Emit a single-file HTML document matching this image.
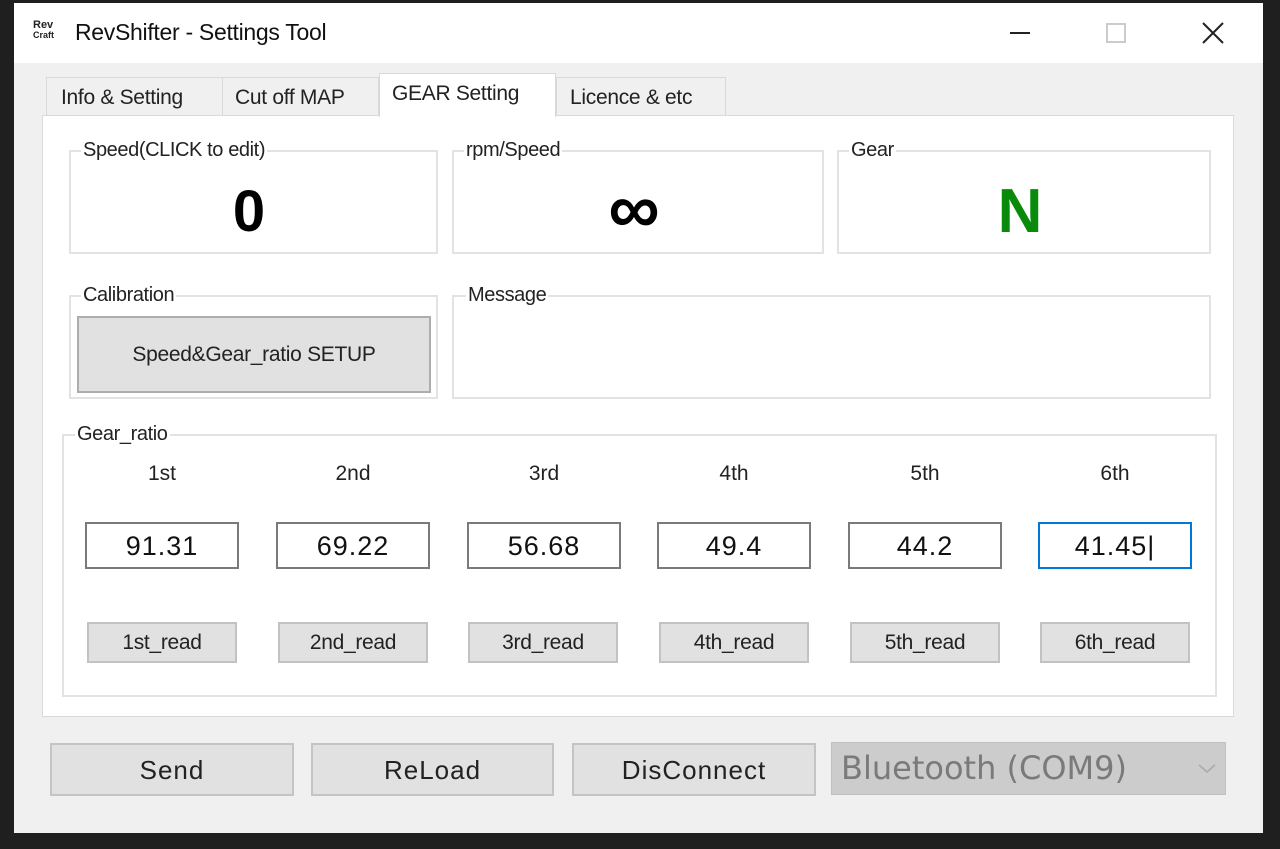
<!DOCTYPE html>
<html><head><meta charset="utf-8"><style>
*{box-sizing:border-box;margin:0;padding:0}
body{width:1280px;height:849px;background:#1f1f1f;position:relative;overflow:hidden;font-family:"Liberation Sans","Noto Sans CJK JP",sans-serif;color:#111}
.a{position:absolute}
.win{left:14px;top:3px;width:1249px;height:830px;background:#f0f0f0}
.title{left:14px;top:3px;width:1249px;height:60px;background:#fff}
.panel{left:42px;top:115px;width:1192px;height:602px;background:#fff;border:1px solid #dadada}
.tab{top:77px;height:39px;background:#f0f0f0;border:1px solid #d9d9d9;border-bottom:none;font-size:21px;line-height:40px;padding-left:14px;color:#222;letter-spacing:-0.3px}
.grp{border:2px solid #e3e3e3}
.lbl{font-size:20px;background:#fff;padding:0 2px;color:#222;line-height:22px;letter-spacing:-0.4px}
.inp{top:522px;width:154px;height:47px;border:2px solid #7a7a7a;background:#fff;font-size:27px;text-align:center;line-height:45px;color:#111;letter-spacing:1px}
.rb{top:622px;width:150px;height:41px;border:2px solid #c2c2c2;background:#e1e1e1;font-size:21px;text-align:center;line-height:37px;color:#222;letter-spacing:-0.3px}
.gl{top:462px;width:154px;text-align:center;font-size:21px;color:#222}
.bb{top:743px;height:53px;border:2px solid #c4c4c4;background:#e1e1e1;font-size:26px;text-align:center;line-height:51px;color:#222;letter-spacing:1px}
</style></head><body>
<div class="a win"></div>
<div class="a title"></div>
<div class="a" style="left:33px;top:20px;font-size:11px;font-weight:bold;line-height:10px;color:#222">Rev<br><span style="font-size:9px">Craft</span></div>
<div class="a" style="left:75px;top:19px;font-size:23px;color:#111;letter-spacing:-0.3px">RevShifter - Settings Tool</div>
<div class="a" style="left:1010px;top:32px;width:20px;height:2px;background:#222"></div>
<div class="a" style="left:1106px;top:23px;width:20px;height:20px;border:2px solid #ccc"></div>
<svg class="a" style="left:1202px;top:22px" width="22" height="22"><path d="M1 1L21 21M21 1L1 21" stroke="#222" stroke-width="2"/></svg>

<div class="a tab" style="left:46px;width:177px">Info &amp; Setting</div>
<div class="a tab" style="left:222px;width:157px;padding-left:12px">Cut off MAP</div>
<div class="a tab" style="left:556px;width:170px;padding-left:13px">Licence &amp; etc</div>
<div class="a panel"></div>
<div class="a" style="left:379px;top:73px;width:177px;height:44px;background:#fff;border:1px solid #d9d9d9;border-bottom:none;font-size:21px;line-height:40px;padding-left:12px;color:#222;letter-spacing:-0.3px">GEAR Setting</div>

<div class="a grp" style="left:69px;top:150px;width:369px;height:104px"></div>
<div class="a lbl" style="left:81px;top:139px">Speed(CLICK to edit)</div>
<div class="a" style="left:69px;top:178px;width:360px;text-align:center;font-size:58px;font-weight:bold;color:#000">0</div>
<div class="a grp" style="left:452px;top:150px;width:372px;height:104px"></div>
<div class="a lbl" style="left:464px;top:139px">rpm/Speed</div>
<div class="a" style="left:452px;top:168px;width:364px;text-align:center;font-size:72px;font-weight:bold;color:#000">∞</div>
<div class="a grp" style="left:837px;top:150px;width:374px;height:104px"></div>
<div class="a lbl" style="left:849px;top:139px">Gear</div>
<div class="a" style="left:837px;top:176px;width:366px;text-align:center;font-size:62px;font-weight:bold;color:#0a8a0a">N</div>

<div class="a grp" style="left:69px;top:295px;width:369px;height:104px"></div>
<div class="a lbl" style="left:81px;top:284px">Calibration</div>
<div class="a" style="left:77px;top:316px;width:354px;height:77px;border:2px solid #adadad;background:#e1e1e1;font-size:21px;text-align:center;line-height:73px;color:#222;letter-spacing:-0.3px">Speed&amp;Gear_ratio SETUP</div>
<div class="a grp" style="left:452px;top:295px;width:759px;height:104px"></div>
<div class="a lbl" style="left:466px;top:284px">Message</div>

<div class="a grp" style="left:62px;top:434px;width:1155px;height:263px"></div>
<div class="a lbl" style="left:75px;top:423px">Gear_ratio</div>

<div class="a gl" style="left:85px">1st</div>
<div class="a gl" style="left:276px">2nd</div>
<div class="a gl" style="left:467px">3rd</div>
<div class="a gl" style="left:657px">4th</div>
<div class="a gl" style="left:848px">5th</div>
<div class="a gl" style="left:1038px">6th</div>

<div class="a inp" style="left:85px">91.31</div>
<div class="a inp" style="left:276px">69.22</div>
<div class="a inp" style="left:467px">56.68</div>
<div class="a inp" style="left:657px">49.4</div>
<div class="a inp" style="left:848px">44.2</div>
<div class="a inp" style="left:1038px;border-color:#0078d7">41.45|</div>

<div class="a rb" style="left:87px">1st_read</div>
<div class="a rb" style="left:278px">2nd_read</div>
<div class="a rb" style="left:468px">3rd_read</div>
<div class="a rb" style="left:659px">4th_read</div>
<div class="a rb" style="left:850px">5th_read</div>
<div class="a rb" style="left:1040px">6th_read</div>

<div class="a bb" style="left:50px;width:244px">Send</div>
<div class="a bb" style="left:311px;width:243px">ReLoad</div>
<div class="a bb" style="left:572px;width:244px">DisConnect</div>
<div class="a" style="left:831px;top:742px;width:395px;height:53px;background:#cccccc;border:1px solid #c0c0c0;font-size:32px;line-height:51px;padding-left:9px;color:#7a7a7a;font-family:'DejaVu Sans',sans-serif">Bluetooth (COM9)</div>
<svg class="a" style="left:1198px;top:764px" width="18" height="10"><path d="M1 1L9 8L17 1" stroke="#aaa" stroke-width="1.5" fill="none"/></svg>
</body></html>
